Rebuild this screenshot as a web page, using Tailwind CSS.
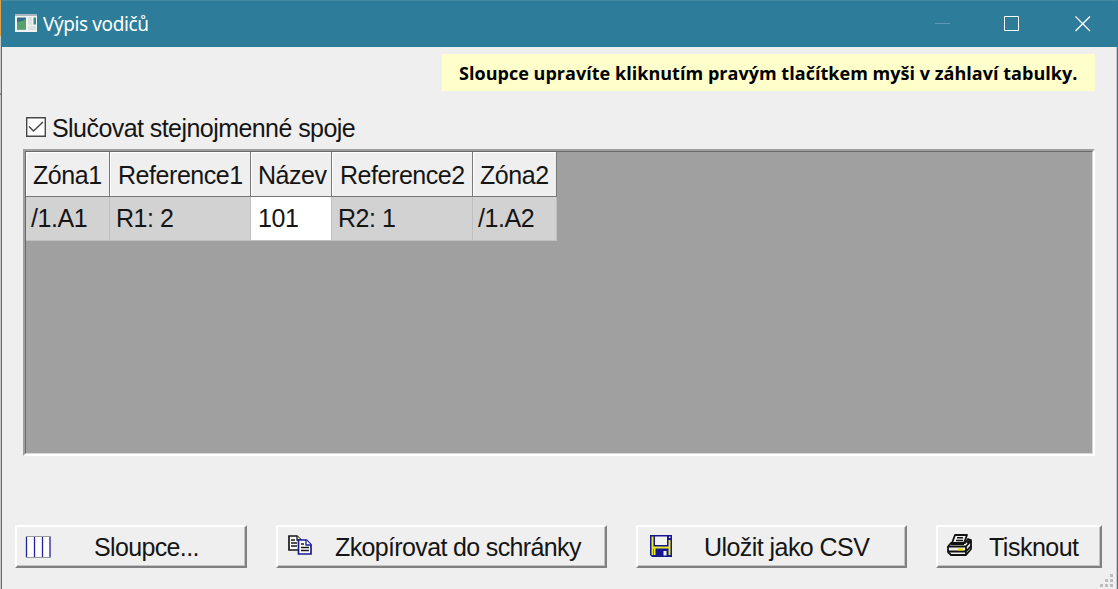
<!DOCTYPE html>
<html lang="cs">
<head>
<meta charset="utf-8">
<title>Výpis vodičů</title>
<script src="https://cdn.jsdelivr.net/npm/@tailwindcss/browser@4"></script>
</head>
<body class="w-[1118px] h-[589px] overflow-hidden bg-[#efefef] font-['Liberation_Sans',sans-serif] text-[25px] tracking-[-0.56px] text-[#151515]">
<div class="flex h-full w-full">
  <div class="w-px shrink-0 bg-[#c9c9c9]"><div class="h-[36px] bg-[#dfa04c]"></div><div class="mt-[57px] h-[2px] bg-[#888]"></div></div>
  <main class="flex w-[1117px] flex-col border-x border-[#2d7c99]">
    <header class="flex h-[47px] shrink-0 items-center border-t border-[#4589a1] bg-[#2d7c99] pl-[13px] text-white">
      <svg class="-mt-[2px] h-[18px] w-[22px]" viewBox="0 0 22 18"><path fill="#f1f3f3" d="M0 0h22v18H0z"/><path fill="#a9b8c0" d="M0 0h22v2H0z"/><path fill="#326f87" d="M2 3.500h9v12H2z"/><path fill="#59a06d" d="M2 8q5 0 9-3v10.500H2z"/><path fill="#dce2e2" d="M13 3h4v8h-4zM13 12h8v4h-8z"/><path fill="#3c8f83" d="M18.500 3.500H21v7h-2.500z"/></svg>
      <h1 class="ml-[6px] whitespace-nowrap font-['Noto_Sans',sans-serif] text-[19px] leading-[28px] tracking-[-0.4px]">Výpis vodičů</h1>
      <div class="ml-auto flex items-center gap-[54px] pr-[26px]">
        <svg class="ml-[2px] h-4 w-[15px]" viewBox="0 0 15 16"><path stroke="#5c9bb1" d="M0 7.500h15"/></svg>
        <svg class="h-4 w-[17px]" viewBox="0 0 17 16" fill="none"><path stroke="#fff" d="M.5.5h14v14H.5z"/></svg>
        <svg class="h-4 w-4" viewBox="0 0 16 16"><path stroke="#fff" stroke-width="1.300" d="m.5.5 14.500 14.500M15 .5.5 15"/></svg>
      </div>
    </header>
    <section class="flex flex-1 flex-col border-r border-[#c8c8c8]">
      <div class="ml-auto mt-[7px] mr-[21px] flex h-[37px] w-[653px] items-center bg-[#ffffcc] pt-[2px] pl-[17px] font-['Open_Sans',sans-serif] text-[18px] font-bold tracking-[0.03px] text-black"><span class="whitespace-nowrap">Sloupce upravíte kliknutím pravým tlačítkem myši v záhlaví tabulky.</span></div>
      <label class="mt-[22px] ml-[24px] flex h-[30px] items-center">
        <svg class="-mt-[2px] h-5 w-5" viewBox="0 0 20 20" fill="none"><path fill="#fff" stroke="#484848" stroke-width="1.400" d="M.7.7h18.600v18.600H.7z"/><path stroke="#484848" stroke-width="1.500" d="m3 9.500 4.500 4.500L17 5"/></svg>
        <span class="ml-[6px] pt-[2px] whitespace-nowrap">Slučovat stejnojmenné spoje</span>
      </label>
      <div class="mt-[6px] ml-[21px] h-[307px] w-[1072px] border-2 border-t-[#a0a0a0] border-l-[#a0a0a0] border-r-white border-b-white">
        <div class="h-full border border-t-[#696969] border-l-[#696969] border-r-[#d8d8d8] border-b-[#d8d8d8] bg-[#a0a0a0]">
          <div class="grid w-[531px] grid-cols-[84px_141px_81px_141px_84px] grid-rows-[45px_44px] whitespace-nowrap tracking-[-0.45px] leading-[47px] *:border-r">
            <div class="border-b border-[#777] bg-[#efefef] pl-[7px] shadow-[inset_1px_1px_#fff]">Zóna1</div>
            <div class="border-b border-[#777] bg-[#efefef] pl-[8px] shadow-[inset_1px_1px_#fff]">Reference1</div>
            <div class="border-b border-[#777] bg-[#efefef] pl-[7px] shadow-[inset_1px_1px_#fff]">Název</div>
            <div class="border-b border-[#777] bg-[#efefef] pl-[8px] shadow-[inset_1px_1px_#fff]">Reference2</div>
            <div class="border-b border-[#777] bg-[#efefef] pl-[7px] shadow-[inset_1px_1px_#fff]">Zóna2</div>
            <div class="border-b border-[#c0c0c0] bg-[#d2d2d2] pl-[5px] leading-[43px]">/1.A1</div>
            <div class="border-b border-[#c0c0c0] bg-[#d2d2d2] pl-[6px] leading-[43px]">R1: 2</div>
            <div class="border-b border-[#c0c0c0] bg-white pl-[7px] leading-[43px]">101</div>
            <div class="border-b border-[#c0c0c0] bg-[#d2d2d2] pl-[6px] leading-[43px]">R2: 1</div>
            <div class="border-b border-[#c0c0c0] bg-[#d2d2d2] pl-[5px] leading-[43px]">/1.A2</div>
          </div>
        </div>
      </div>
      <footer class="mt-[69px] ml-[13px] flex gap-[29px] whitespace-nowrap tracking-[-0.64px] *:flex *:h-[43px] *:items-center *:border-2 *:border-t-white *:border-l-white *:border-r-[#808080] *:border-b-[#808080] *:shadow-[inset_-1px_-1px_#c4c4c4]">
        <button class="w-[232px] pl-[8px]">
          <svg class="h-[22px] w-[26px]" viewBox="0 0 26 22"><path fill="#fff" d="M1 1h24v20H1z"/><path stroke="#999" d="M1 .5h25M1 21.500h25"/><path stroke="#22229c" stroke-width="1.300" d="M1.500 1v20M9.500 1v20M17.500 1v20M25 1v20"/></svg>
          <span class="ml-[43px] pt-[2px]">Sloupce...</span>
        </button>
        <button class="w-[331px] pl-[10px]">
          <svg class="-mt-[4px] h-[20px] w-[24px]" viewBox="0 0 24 20" fill="#fff"><path stroke="#181818" stroke-width="1.700" d="M1 1h8l4 4v10H1z"/><path stroke="#181818" stroke-width="1.300" d="M9 1v4h4M3 5h4M3 8h6M3 11h6"/><path stroke="#1b1b98" stroke-width="1.700" d="M10.500 5h8l4.500 4.500V19H10.500z"/><path stroke="#1b1b98" stroke-width="1.300" d="M18 5v5h5"/><path stroke="#181818" stroke-width="1.300" d="M13 9h3M13 12.500h8M13 15.500h8"/></svg>
          <span class="ml-[23px] pt-[2px]">Zkopírovat do schránky</span>
        </button>
        <button class="w-[271px] pl-[12px]">
          <svg class="-mt-[2px] h-[22px] w-[22px]" viewBox="0 0 22 22"><path fill="#17178f" d="M0 0h22v22H2l-2-2z"/><path fill="#e8e822" d="M1.500 1.500h2V20h-2zM18.500 5h2v15h-2zM3 11.500h16v2H3zM4 13h1.500v7H4z"/><path fill="#f2f2f2" d="M5 1.500h12v8.500H5zM19 1.500h1.500V3H19zM13.500 16h3v4.500h-3z"/></svg>
          <span class="ml-[32px] pt-[2px] tracking-[-0.56px]">Uložit jako CSV</span>
        </button>
        <button class="w-[166px] pl-[9px]">
          <svg class="-mt-[3px] h-[22px] w-[25px]" viewBox="0 0 25 22" fill="#f0f0f0" stroke="#111" stroke-width="1.800" stroke-linejoin="round"><path d="M5 9 8 1h12l-3 8"/><path stroke-width="1.400" d="M10 3.800h6M9 6.500h7"/><path d="M1 12.500 4 9h14l3-4 3 1v9l-5 6H4l-3-3z"/><path fill="none" d="M1 12.500h18l5-5.500M19 12.500v8M1 17.500h18l5-5.500M4 10h13M20 9l3-3"/><path stroke="#e8e000" stroke-width="2" d="M11 15.500h5"/></svg>
          <span class="ml-[17px] pt-[2px] tracking-[-0.5px]">Tisknout</span>
        </button>
      </footer>
      <svg class="mt-[5px] mr-[3px] ml-auto h-[14px] w-[13px]" viewBox="0 0 13 14" fill="#bdbdbd"><path d="M10 1h3v3h-3zM5 6h3v3H5zM10 6h3v3h-3zM0 11h3v3H0zM5 11h3v3H5zM10 11h3v3h-3z"/></svg>
    </section>
  </main>
</div>
</body>
</html>
